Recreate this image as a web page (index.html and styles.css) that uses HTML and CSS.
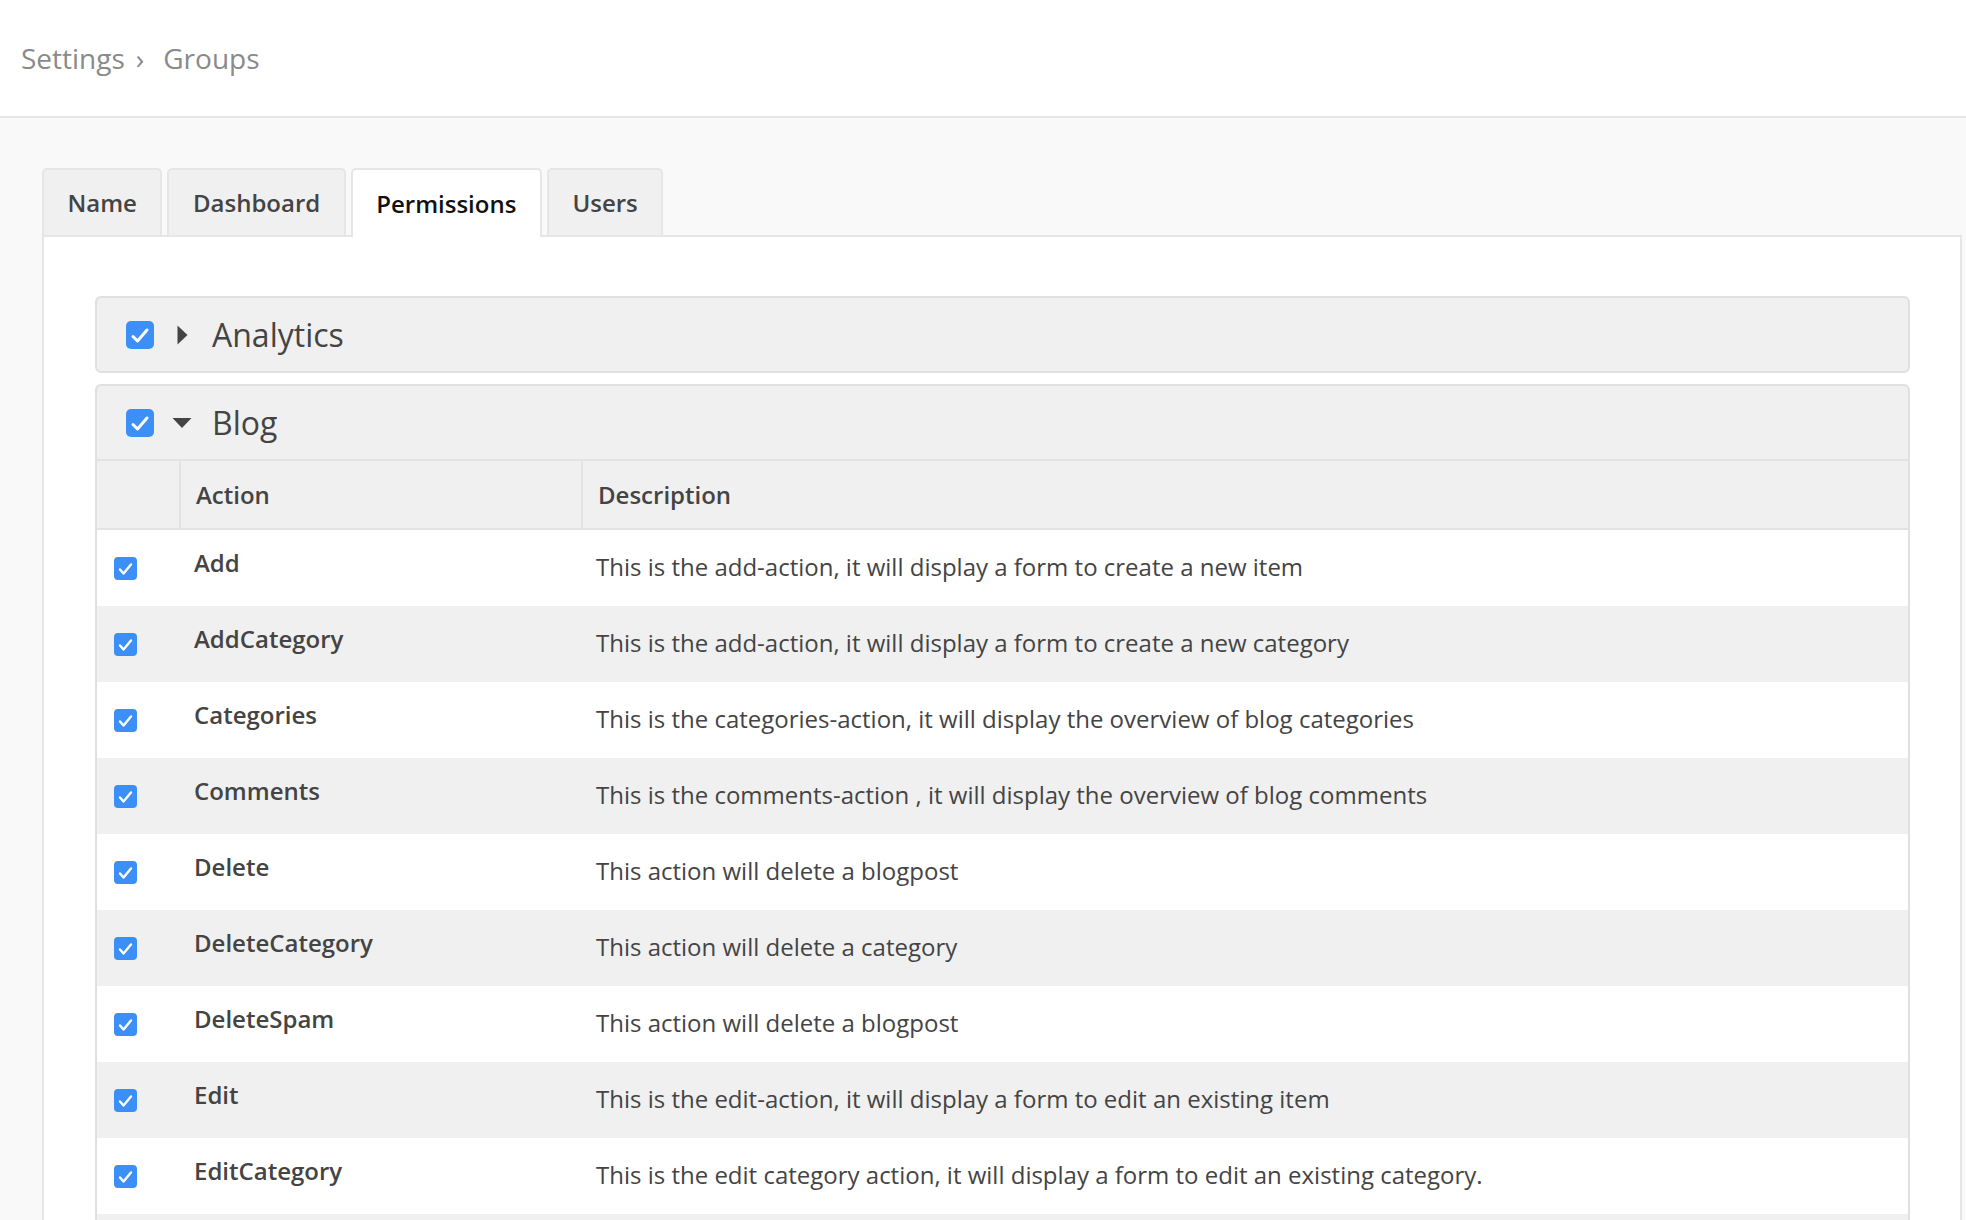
FILE: index.html
```html
<!DOCTYPE html>
<html lang="en">
<head>
<meta charset="utf-8">
<title>Groups - Permissions</title>
<link rel="stylesheet" href="styles.css">
</head>
<body>
<header class="topbar">
  <nav class="breadcrumb">
    <span class="crumb">Settings</span><span class="sep">›</span><span class="crumb">Groups</span>
  </nav>
</header>
<main class="page">
  <ul class="tabs">
    <li class="tab">Name</li>
    <li class="tab">Dashboard</li>
    <li class="tab active">Permissions</li>
    <li class="tab">Users</li>
  </ul>
  <section class="panel">
    <div class="group">
      <div class="group-head">
        <span class="cb cb-lg"><svg viewBox="0 0 28 28" width="28" height="28"><rect width="28" height="28" rx="5" fill="#3b8ff6"/><path d="M7 15.5 L11.5 20 L21 9" fill="none" stroke="#fff" stroke-width="3" stroke-linecap="round" stroke-linejoin="round"/></svg></span>
        <span class="caret"><svg viewBox="0 0 20 20" width="20" height="20"><polygon points="5.5,0.5 15.5,10 5.5,19.5" fill="#444"/></svg></span>
        <span class="group-title">Analytics</span>
      </div>
    </div>
    <div class="group">
      <div class="group-head">
        <span class="cb cb-lg"><svg viewBox="0 0 28 28" width="28" height="28"><rect width="28" height="28" rx="5" fill="#3b8ff6"/><path d="M7 15.5 L11.5 20 L21 9" fill="none" stroke="#fff" stroke-width="3" stroke-linecap="round" stroke-linejoin="round"/></svg></span>
        <span class="caret"><svg viewBox="0 0 20 20" width="20" height="20"><polygon points="0.5,5 19.5,5 10,15" fill="#444"/></svg></span>
        <span class="group-title">Blog</span>
      </div>
      <table class="perms">
        <colgroup><col class="c-check"><col class="c-action"><col></colgroup>
        <thead>
          <tr><th></th><th>Action</th><th>Description</th></tr>
        </thead>
        <tbody>
          <tr><td class="check"><span class="cb cb-sm"><svg viewBox="0 0 23 23" width="23" height="23"><rect width="23" height="23" rx="4" fill="#3b8ff6"/><path d="M6 12.5 L9.5 16.5 L17 7.5" fill="none" stroke="#fff" stroke-width="2.4" stroke-linecap="round" stroke-linejoin="round"/></svg></span></td><td><span class="action">Add</span></td><td>This is the add-action, it will display a form to create a new item</td></tr>
          <tr><td class="check"><span class="cb cb-sm"><svg viewBox="0 0 23 23" width="23" height="23"><rect width="23" height="23" rx="4" fill="#3b8ff6"/><path d="M6 12.5 L9.5 16.5 L17 7.5" fill="none" stroke="#fff" stroke-width="2.4" stroke-linecap="round" stroke-linejoin="round"/></svg></span></td><td><span class="action">AddCategory</span></td><td>This is the add-action, it will display a form to create a new category</td></tr>
          <tr><td class="check"><span class="cb cb-sm"><svg viewBox="0 0 23 23" width="23" height="23"><rect width="23" height="23" rx="4" fill="#3b8ff6"/><path d="M6 12.5 L9.5 16.5 L17 7.5" fill="none" stroke="#fff" stroke-width="2.4" stroke-linecap="round" stroke-linejoin="round"/></svg></span></td><td><span class="action">Categories</span></td><td>This is the categories-action, it will display the overview of blog categories</td></tr>
          <tr><td class="check"><span class="cb cb-sm"><svg viewBox="0 0 23 23" width="23" height="23"><rect width="23" height="23" rx="4" fill="#3b8ff6"/><path d="M6 12.5 L9.5 16.5 L17 7.5" fill="none" stroke="#fff" stroke-width="2.4" stroke-linecap="round" stroke-linejoin="round"/></svg></span></td><td><span class="action">Comments</span></td><td>This is the comments-action , it will display the overview of blog comments</td></tr>
          <tr><td class="check"><span class="cb cb-sm"><svg viewBox="0 0 23 23" width="23" height="23"><rect width="23" height="23" rx="4" fill="#3b8ff6"/><path d="M6 12.5 L9.5 16.5 L17 7.5" fill="none" stroke="#fff" stroke-width="2.4" stroke-linecap="round" stroke-linejoin="round"/></svg></span></td><td><span class="action">Delete</span></td><td>This action will delete a blogpost</td></tr>
          <tr><td class="check"><span class="cb cb-sm"><svg viewBox="0 0 23 23" width="23" height="23"><rect width="23" height="23" rx="4" fill="#3b8ff6"/><path d="M6 12.5 L9.5 16.5 L17 7.5" fill="none" stroke="#fff" stroke-width="2.4" stroke-linecap="round" stroke-linejoin="round"/></svg></span></td><td><span class="action">DeleteCategory</span></td><td>This action will delete a category</td></tr>
          <tr><td class="check"><span class="cb cb-sm"><svg viewBox="0 0 23 23" width="23" height="23"><rect width="23" height="23" rx="4" fill="#3b8ff6"/><path d="M6 12.5 L9.5 16.5 L17 7.5" fill="none" stroke="#fff" stroke-width="2.4" stroke-linecap="round" stroke-linejoin="round"/></svg></span></td><td><span class="action">DeleteSpam</span></td><td>This action will delete a blogpost</td></tr>
          <tr><td class="check"><span class="cb cb-sm"><svg viewBox="0 0 23 23" width="23" height="23"><rect width="23" height="23" rx="4" fill="#3b8ff6"/><path d="M6 12.5 L9.5 16.5 L17 7.5" fill="none" stroke="#fff" stroke-width="2.4" stroke-linecap="round" stroke-linejoin="round"/></svg></span></td><td><span class="action">Edit</span></td><td>This is the edit-action, it will display a form to edit an existing item</td></tr>
          <tr><td class="check"><span class="cb cb-sm"><svg viewBox="0 0 23 23" width="23" height="23"><rect width="23" height="23" rx="4" fill="#3b8ff6"/><path d="M6 12.5 L9.5 16.5 L17 7.5" fill="none" stroke="#fff" stroke-width="2.4" stroke-linecap="round" stroke-linejoin="round"/></svg></span></td><td><span class="action">EditCategory</span></td><td>This is the edit category action, it will display a form to edit an existing category.</td></tr>
          <tr class="stub"><td class="check"></td><td></td><td></td></tr>
        </tbody>
      </table>
    </div>
  </section>
</main>
</body>
</html>
```

FILE: styles.css
```css
* { box-sizing: border-box; }

html, body {
  margin: 0;
  padding: 0;
}

body {
  width: 1966px;
  height: 1220px;
  overflow: hidden;
  background: #f9f9f9;
  font-family: "Open Sans", "Liberation Sans", sans-serif;
  color: #444;
}

.topbar {
  height: 118px;
  background: #fff;
  border-bottom: 2px solid #e6e6e6;
  display: flex;
  align-items: center;
  padding: 0 0 0 21px;
}

.breadcrumb {
  font-size: 28px;
  color: #8a8a8a;
  display: flex;
  align-items: center;
}

.sep {
  margin: 0 19px 0 11px;
}

.page {
  padding: 50px 4px 0 42px;
}

.tabs {
  list-style: none;
  margin: 0;
  padding: 0;
  display: flex;
  position: relative;
  z-index: 1;
}

.tab {
  height: 67px;
  display: flex;
  align-items: center;
  padding: 0 23.5px;
  margin-right: 5px;
  background: #f0f0f0;
  border: 2px solid #e6e6e6;
  border-bottom: none;
  border-radius: 5px 5px 0 0;
  font-size: 24px;
  font-weight: 600;
  color: #444;
}

.tab.active {
  background: #fff;
  color: #111;
  height: 69px;
  margin-bottom: -2px;
}

.panel {
  background: #fff;
  border: 2px solid #e6e6e6;
  border-bottom: none;
  padding: 59px 50px 0 51px;
  min-height: 1000px;
}

.group {
  background: #f0f0f0;
  border: 2px solid #e0e0e0;
  border-radius: 6px;
  margin-bottom: 11px;
  overflow: hidden;
}

.group-head {
  height: 73px;
  display: flex;
  align-items: center;
  padding-left: 29px;
}

.cb {
  display: block;
  flex: none;
}

.cb svg { display: block; }

.caret {
  display: block;
  width: 20px;
  height: 20px;
  margin-left: 18px;
}

.caret svg { display: block; }

.group-title {
  margin-left: 20px;
  font-size: 32px;
  color: #444;
  line-height: 1;
}

.perms {
  width: 100%;
  border-collapse: collapse;
  table-layout: fixed;
  font-size: 24px;
}

.c-check { width: 83px; }
.c-action { width: 402px; }

.perms thead tr {
  background: #f0f0f0;
  border-top: 2px solid #e3e3e3;
  border-bottom: 2px solid #e3e3e3;
}

.perms th {
  padding: 17px 15px 17px;
  line-height: 33px;
  text-align: left;
  font-weight: 600;
  color: #444;
}

.perms th + th {
  border-left: 2px solid #e3e3e3;
}

.perms tbody tr {
  background: #fff;
}

.perms tbody tr:nth-child(even) {
  background: #f0f0f0;
}

.perms td {
  padding: 16px 16px 19px 14px;
  vertical-align: middle;
  line-height: 33px;
  color: #444;
  white-space: nowrap;
}

.perms td.check {
  padding: 18px 16px 17px 17px;
}

.perms tr.stub td {
  height: 76px;
}

.action {
  display: block;
  font-weight: 600;
  margin-bottom: 8px;
}
```
